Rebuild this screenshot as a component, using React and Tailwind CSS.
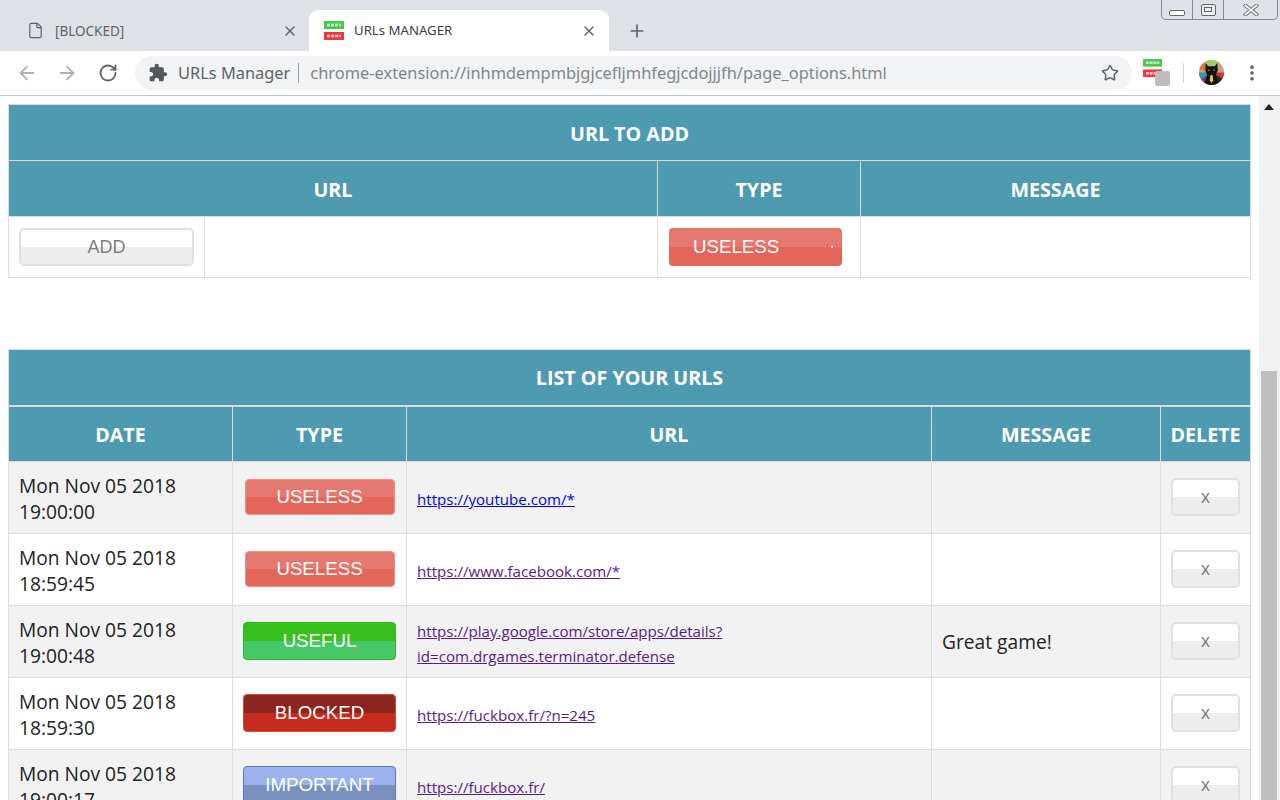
import React from "react";
import { ArrowLeft, ArrowRight, File, MoreVertical, Plus, RotateCw, Star, X } from "lucide-react";
import { MdExtension } from "react-icons/md";

const uiFont = "font-['Noto_Sans','Open_Sans',sans-serif]";

const typeStyles = {
  USELESS: "bg-[linear-gradient(to_bottom,#e5786f_50%,#e4665b_50%)] border-[#e8928b] w-[150px] h-[36px]",
  USEFUL: "bg-[linear-gradient(to_bottom,#38c01c_50%,#45c865_50%)] border-[#2cb52a] w-[153px] h-[38px]",
  BLOCKED: "bg-[linear-gradient(to_bottom,#8a261d_50%,#c52c1e_50%)] border-[#d2493d] w-[153px] h-[38px]",
  IMPORTANT: "bg-[linear-gradient(to_bottom,#9bb2ee_50%,#7a90bf_50%)] border-[#5f7bb3] w-[153px] h-[38px]",
};

const rows = [
  { date: "Mon Nov 05 2018 19:00:00", type: "USELESS", url: "https://youtube.com/*", fresh: true },
  { date: "Mon Nov 05 2018 18:59:45", type: "USELESS", url: "https://www.facebook.com/*" },
  { date: "Mon Nov 05 2018 19:00:48", type: "USEFUL", url: "https://play.google.com/store/apps/details?id=com.drgames.terminator.defense", message: "Great game!" },
  { date: "Mon Nov 05 2018 18:59:30", type: "BLOCKED", url: "https://fuckbox.fr/?n=245" },
  { date: "Mon Nov 05 2018 19:00:17", type: "IMPORTANT", url: "https://fuckbox.fr/" },
];

const Favicon = ({ className }) => (
  <svg viewBox="0 0 22 20" className={className}>
    <rect x="0" y="0" width="20" height="8" fill="#3ecf4a" />
    <path d="M3 4h14" stroke="#d8f5da" strokeWidth="2.5" strokeDasharray="3 1" />
    <rect x="0" y="11" width="20" height="8" fill="#f5323f" />
    <path d="M3 15h14" stroke="#ffd5d8" strokeWidth="2.5" strokeDasharray="3 1" />
  </svg>
);

const Avatar = () => (
  <svg viewBox="0 0 26 26" className="h-[25px] w-[25px]">
    <defs>
      <clipPath id="round">
        <circle cx="13" cy="13" r="13" />
      </clipPath>
    </defs>
    <g clipPath="url(#round)">
      <rect width="26" height="26" fill="#c9a27a" />
      <path d="M13 13L3 0H22Z" fill="#a7c66c" />
      <path d="M13 13L3 0L0 0V10Z" fill="#e8702a" />
      <path d="M13 13H0V21Z" fill="#1fa3a8" />
      <path d="M13 13L0 21V26H10Z" fill="#8a2f8a" />
      <path d="M13 13H26V20Z" fill="#d8342c" />
      <path d="M13 13L26 20V26H16Z" fill="#1b2f2a" />
      <path d="M7 3l2.500 3.500h7L19 3l.5 8-2 4.500L21 26H5l3.500-10.500-2-4.500Z" fill="#15130f" />
      <path d="M9.500 10l2 .5-1.500 1ZM16.500 10l-2 .5 1.500 1Z" fill="#e3d24a" />
      <path d="M12 15.500h2l.8 5.500-1.800 3-1.800-3Z" fill="#e3d24a" />
    </g>
  </svg>
);

const WindowControls = () => (
  <div className="ml-auto mr-[2px] flex h-[20px] w-[117px] rounded-b-[5px] border border-t-0 border-[#85888c]">
    <div className="flex w-[31px] items-center justify-center border-r border-[#85888c]">
      <div className="mt-[6px] h-[6px] w-[16px] rounded-[2px] border border-[#666] bg-white" />
    </div>
    <div className="flex w-[31px] items-center justify-center border-r border-[#85888c]">
      <div className="flex h-[12px] w-[15px] items-center justify-center rounded-[2px] border border-[#666] bg-[#eef0f2]">
        <div className="h-[5px] w-[8px] border border-[#666]" />
      </div>
    </div>
    <div className="flex flex-1 items-center justify-center">
      <svg viewBox="0 0 16 12" className="h-[12px] w-[16px]">
        <path d="M2.500 1.500L13.500 10.500M13.500 1.500L2.500 10.500" stroke="#6b6e72" strokeWidth="3.600" strokeLinecap="square" />
        <path d="M2.500 1.500L13.500 10.500M13.500 1.500L2.500 10.500" stroke="#f4f5f6" strokeWidth="1.800" strokeLinecap="square" />
      </svg>
    </div>
  </div>
);

const TabBar = () => (
  <div className={`flex h-[51px] shrink-0 bg-[#dee1e6] ${uiFont}`}>
    <div className="mt-[10px] flex h-[41px] w-[309px] items-center pl-[27px] pr-[11px] text-[13.5px] text-[#5f6368]">
      <File size={17} strokeWidth={1.6} className="text-[#5a5d61]" />
      <span className="ml-[11px] mt-px">[BLOCKED]</span>
      <X size={16} strokeWidth={2} className="ml-auto text-[#5f6368]" />
    </div>
    <div className="mt-[10px] flex h-[41px] w-[300px] items-center rounded-t-[9px] bg-white pl-[15px] pr-[12px] text-[13.2px] text-[#3c4043]">
      <Favicon className="h-[20px] w-[22px]" />
      <span className="ml-[8px] mt-px">URLs MANAGER</span>
      <X size={16} strokeWidth={2} className="ml-auto text-[#5f6368]" />
    </div>
    <div className="mt-[10px] flex h-[41px] items-center pl-[18px]">
      <Plus size={20} strokeWidth={2} className="text-[#5f6368]" />
    </div>
    <WindowControls />
  </div>
);

const Toolbar = () => (
  <div className={`flex h-[45px] shrink-0 items-center border-b border-[#c4c5c7] bg-white pb-[1px] ${uiFont}`}>
    <ArrowLeft size={22} strokeWidth={2} className="ml-[16px] text-[#b0b2b5]" />
    <ArrowRight size={22} strokeWidth={2} className="ml-[18px] text-[#b0b2b5]" />
    <RotateCw size={20} strokeWidth={2.2} className="ml-[20px] text-[#5f6368]" />
    <div className="ml-[17px] flex h-[34px] w-[997px] items-center rounded-full bg-[#f1f3f4] pl-[13px] pr-[13px] text-[16.4px]">
      <MdExtension size={20} className="text-[#54575b]" />
      <span className="ml-[10px] mt-px text-[#5f6368]">URLs Manager</span>
      <span className="ml-[8px] h-[20px] w-px bg-[#9a9da1]" />
      <span className="ml-[11px] mt-px text-[#80868b]">chrome-extension://inhmdempmbjgjcefljmhfegjcdojjjfh/page_options.html</span>
      <Star size={18} strokeWidth={2} className="ml-auto text-[#5f6368]" />
    </div>
    <div className="relative ml-[11px] h-[27px] w-[27px]">
      <Favicon className="h-[19px] w-[21px]" />
      <div className="absolute bottom-0 right-0 h-[15px] w-[15px] rounded-[2px] bg-[#bdbdbd]" />
    </div>
    <div className="ml-[13px] h-[20px] w-px bg-[#d5d6d8]" />
    <div className="ml-[15px] flex">
      <Avatar />
    </div>
    <MoreVertical size={20} strokeWidth={2.4} className="ml-[18px] text-[#5f6368]" />
  </div>
);

const Head = ({ children, colSpan, title }) => (
  <th
    colSpan={colSpan}
    className={`h-[56px] border border-[#d8dcdd] bg-[#4e9ab0] p-0 pt-[2px] text-center text-[19.7px] font-bold text-white ${title ? "border-b-2" : ""}`}
  >
    {children}
  </th>
);

const GhostButton = ({ children, className }) => (
  <button className={`flex h-[38px] items-center justify-center rounded-[5px] border-2 border-[#e0e0e0] bg-[linear-gradient(to_bottom,#ffffff_50%,#ededed_50%)] font-['Liberation_Sans',Arial,sans-serif] text-[#7f7f7f] ${className}`}>
    {children}
  </button>
);

const AddTable = () => (
  <table className="w-[1242px] table-fixed border-collapse">
    <colgroup>
      <col className="w-[196px]" />
      <col className="w-[453px]" />
      <col className="w-[203px]" />
      <col className="w-[390px]" />
    </colgroup>
    <thead>
      <tr>
        <Head colSpan={4}>URL TO ADD</Head>
      </tr>
      <tr>
        <Head colSpan={2}>URL</Head>
        <Head>TYPE</Head>
        <Head>MESSAGE</Head>
      </tr>
    </thead>
    <tbody>
      <tr className="h-[61px] bg-white">
        <td className="border border-[#dddddd] px-[10px]">
          <GhostButton className="w-[175px] text-[18px]">ADD</GhostButton>
        </td>
        <td className="border border-[#dddddd]" />
        <td className="border border-[#dddddd] px-[11px]">
          <div className="relative flex h-[38px] w-[173px] items-center rounded-[4px] bg-[linear-gradient(to_bottom,#e5786f_50%,#e4665b_50%)] pl-[24px] font-['Liberation_Sans',Arial,sans-serif] text-[18.7px] text-white">
            USELESS
            <span className="absolute right-[9px] top-[18px] h-[2px] w-[2px] bg-white" />
          </div>
        </td>
        <td className="border border-[#dddddd]" />
      </tr>
    </tbody>
  </table>
);

const UrlRow = ({ row, striped }) => (
  <tr className={`h-[72px] text-[19.2px] leading-[26px] text-[#222] ${striped ? "bg-[#f2f2f2]" : "bg-white"}`}>
    <td className="border border-[#dddddd] px-[10px] pt-[2px]">{row.date}</td>
    <td className="border border-[#dddddd] px-[10px]">
      <div className={`mx-auto mb-[2px] flex items-center justify-center rounded-[4px] border font-['Liberation_Sans',Arial,sans-serif] text-[18.7px] text-white ${typeStyles[row.type]}`}>
        {row.type}
      </div>
    </td>
    <td className="border border-[#dddddd] px-[10px] pt-[4px] text-[15.1px] leading-[25px]">
      <a href="#" className={`break-words underline ${row.fresh ? "text-[#0000ee]" : "text-[#551a8b]"}`}>
        {row.url}
      </a>
    </td>
    <td className="border border-[#dddddd] px-[10px]">{row.message}</td>
    <td className="border border-[#dddddd] px-[10px]">
      <GhostButton className="mb-[2px] w-[69px] text-[18px]">x</GhostButton>
    </td>
  </tr>
);

const ListTable = () => (
  <table className="mt-[71px] w-[1242px] table-fixed border-collapse">
    <colgroup>
      <col className="w-[224px]" />
      <col className="w-[174px]" />
      <col className="w-[525px]" />
      <col className="w-[229px]" />
      <col className="w-[90px]" />
    </colgroup>
    <thead>
      <tr>
        <Head colSpan={5} title>LIST OF YOUR URLS</Head>
      </tr>
      <tr>
        <Head>DATE</Head>
        <Head>TYPE</Head>
        <Head>URL</Head>
        <Head>MESSAGE</Head>
        <Head>DELETE</Head>
      </tr>
    </thead>
    <tbody>
      {rows.map((row, i) => (
        <UrlRow key={row.date} row={row} striped={i % 2 === 0} />
      ))}
    </tbody>
  </table>
);

const Scrollbar = () => (
  <div className="flex w-[21px] shrink-0 flex-col items-start bg-[#f1f1f1] pl-[2px]">
    <div className="ml-[3px] mt-[8px] h-0 w-0 border-x-[5px] border-b-[6px] border-x-transparent border-b-[#222]" />
    <div className="mt-[261px] w-[16px] flex-1 bg-[#bfbfbf]" />
  </div>
);

export default function App() {
  return (
    <div className="flex h-screen flex-col overflow-hidden bg-white">
      <TabBar />
      <Toolbar />
      <div className="flex min-h-0 flex-1">
        <main className="min-w-0 flex-1 overflow-hidden pl-[8px] pt-[8px] font-['Open_Sans',sans-serif]">
          <AddTable />
          <ListTable />
        </main>
        <Scrollbar />
      </div>
    </div>
  );
}
